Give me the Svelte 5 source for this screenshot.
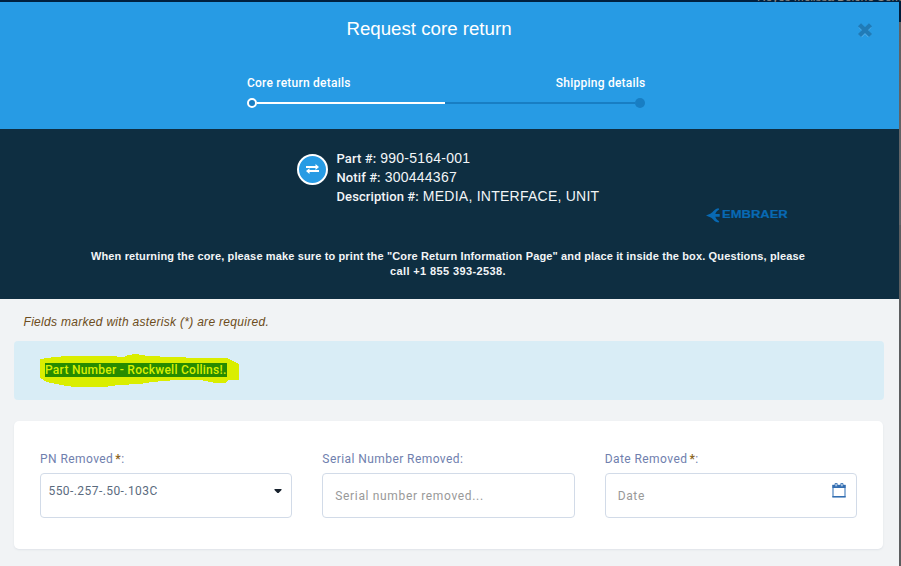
<script>
  const steps = ['Core return details', 'Shipping details'];
  const facts = [
    ['Part #:', '990-5164-001'],
    ['Notif #:', '300444367'],
    ['Description #:', 'MEDIA, INTERFACE, UNIT'],
  ];
</script>

<div class="page">
  <div class="backdrop"><span>Reyes Melissa Belone Sem</span></div>
  <div class="modal">
    <header>
      <div class="title"><h1>Request core return</h1></div>
      <button class="close" aria-label="Close">
        <svg width="16" height="16" viewBox="0 0 16 16">
          <path d="M3.2 4 12.8 13.8M12.8 4 3.2 13.8" stroke="#62b8ef" stroke-width="4.4" />
          <path d="M2.5 2.7 13.5 13.5M13.5 2.7 2.5 13.5" stroke="#207bb7" stroke-width="4.4" />
        </svg>
      </button>
      <div class="steps">
        <div class="names">
          {#each steps as step}<span>{step}</span>{/each}
        </div>
        <div class="track"><i class="dot on"></i><i class="line done"></i><i class="line"></i><i class="dot"></i></div>
      </div>
    </header>

    <section class="summary">
      <div class="part">
        <div class="badge">
          <svg width="13" height="10" viewBox="0 0 13 10" fill="#fff">
            <path d="M0 2h9.5V0L13 3 9.5 6V4H0zM13 6H3.5V4.2L0 7l3.5 3V8H13z" />
          </svg>
        </div>
        <dl>
          {#each facts as [k, v]}<div><dt>{k}</dt> <dd>{v}</dd></div>{/each}
        </dl>
      </div>
      <div class="brand">
        <svg width="14" height="15" viewBox="0 0 14 15" fill="#0869b3">
          <path d="M0 7.4 4.8 5.4C7.2 4 8.6.8 12.6.2L13.2 1.6C11 2.8 9.9 4.3 9.3 6.1h4.4v2.6H9.3c.6 1.8 1.7 3.3 3.9 4.5l-.6 1.4C8.6 14 7.2 10.8 4.8 9.4Z" />
        </svg>
        <span>EMBRAER</span>
      </div>
      <p>
        <span class="l1">When returning the core, please make sure to print the "Core Return Information Page" and place it inside the box. Questions, please</span><br />
        <span class="l2">call +1 855 393-2538.</span>
      </p>
    </section>

    <main>
      <div class="hint"><span>Fields marked with asterisk (*) are required.</span></div>
      <div class="notice">
        <svg class="marker" width="200" height="34" viewBox="0 0 200 34" shape-rendering="crispEdges" fill="#daee00">
          <path d="M0 5 14 3 28 2H69L84 3 88 1 96 0 108 2 131 3 160 4H187L191 6 199 10V26H188L186 29H175L161 26H136L112 28 100 30 78 31 64 33H36L26 32 7 28 0 24Z" />
        </svg>
        <mark>Part Number - Rockwell Collins!.</mark>
      </div>
      <div class="card">
        <div class="field">
          <label for="pn"><span>PN Removed</span><b>*</b>:</label>
          <div class="box select" id="pn">
            <span>550-.257-.50-.103C</span>
            <svg width="8" height="5" viewBox="0 0 8 5"><path d="M.5 0h7v1L4.6 4H3.4L.5 1z" fill="#17212d" /></svg>
          </div>
        </div>
        <div class="field">
          <label for="sn"><span>Serial Number Removed:</span></label>
          <div class="box" id="sn"><span class="ph">Serial number removed...</span></div>
        </div>
        <div class="field">
          <label for="dt"><span>Date Removed</span><b>*</b>:</label>
          <div class="box date" id="dt">
            <span class="ph">Date</span>
            <svg width="14" height="15" viewBox="0 0 14 15">
              <path d="M1 2.5h12v11.3H1z" fill="#fff" stroke="#5e8fc5" stroke-width="1.3" />
              <path d="M.4 2h13.2v3H.4z" fill="#346eb1" />
              <path d="M.4 13h13.2v1.3H.4z" fill="#346eb1" />
              <path d="M3 .5h2.2v3.2H3zM8.8.5H11v3.2H8.8z" fill="#c6d9ee" stroke="#346eb1" stroke-width=".8" />
            </svg>
          </div>
        </div>
      </div>
    </main>
  </div>
</div>

<style>
  * { box-sizing: border-box; }
  .page {
    position: relative; width: 901px; height: 566px; padding-top: 2px; overflow: hidden;
    font-family: Roboto, 'Liberation Sans', sans-serif;
    background: linear-gradient(#001d3a 22px, #5f6062 22px, #646568 225px, #5c5d5f 225px);
  }
  .backdrop { position: absolute; top: 0; left: 0; width: 901px; height: 2px; background: #00203e; }
  .backdrop span { position: absolute; left: 757px; top: -9px; font: 12px/12px 'Liberation Sans', sans-serif; color: #8f8b85; white-space: nowrap; letter-spacing: -.1px; }
  .modal { position: relative; width: 899px; height: 564px; background: #f1f3f5; }
  header { position: relative; height: 127px; background: #279be4; color: #fff; overflow: hidden; }
  .title { padding: 16px 41px 0 0; text-align: center; }
  h1 { margin: 0; font: 400 18.7px/22px 'Liberation Sans', sans-serif; }
  .close { position: absolute; right: 26px; top: 20px; padding: 0; border: 0; background: none; line-height: 0; }
  .steps { width: 398px; margin: 34px 0 0 247px; }
  .names { display: flex; justify-content: space-between; font: 500 12px/18px Roboto, sans-serif; letter-spacing: .23px; }
  .names span:last-child { margin-right: -.5px; }
  .track { display: flex; align-items: center; height: 10px; margin-top: 6px; }
  .dot { width: 10px; height: 10px; border-radius: 50%; background: #187ec3; }
  .dot.on { border: 2px solid #fff; }
  .line { flex: 1; height: 2px; background: #187ec3; }
  .line.done { background: #fff; flex: 0 0 188px; }
  .summary { height: 170px; background: #0e2e41; color: #f2f5f7; padding-top: 20px; }
  .part { display: flex; padding-left: 297px; height: 57px; }
  .badge { width: 31px; height: 31px; border: 2px solid #fff; border-radius: 50%; background: #279be4; margin: 5px 8.5px 0 0; display: grid; place-items: center; }
  .badge svg { margin-top: -2px; }
  dl { margin: 0; }
  dl div { display: flex; gap: 4px; height: 19px; align-items: baseline; line-height: 19px; white-space: nowrap; }
  dt { font: 500 13px/19px Roboto, sans-serif; letter-spacing: .1px; }
  dd { margin: 0; font: 14px/19px 'Liberation Sans', sans-serif; letter-spacing: .25px; }
  .brand { display: flex; align-items: center; height: 16px; margin: 1px 0 0 706px; color: #0869b3; font: 700 10px/16px 'Liberation Sans', sans-serif; }
  .brand span { display: block; transform: scaleX(1.3); transform-origin: left; margin-left: 2px; -webkit-text-stroke: .2px #0869b3; }
  p { margin: 26px 0 0; width: 896px; text-align: center; font: 700 11px/15px 'Liberation Sans', sans-serif; white-space: nowrap; }
  .l1 { letter-spacing: .135px; }
  .l2 { letter-spacing: .39px; }
  .hint { padding: 14px 0 0 23.5px; height: 42px; font: italic 12px/18px 'Liberation Sans', sans-serif; letter-spacing: .3px; color: #6c4c20; }
  .notice { position: relative; width: 870px; height: 59px; margin-left: 14px; border-radius: 4px; background: #d9edf6; padding: 22px 0 0 31px; }
  .marker { position: absolute; left: 26px; top: 13px; }
  mark { position: relative; display: inline-block; height: 14px; background: #278b00; color: #daf000; font: 500 12px/14px Roboto, sans-serif; letter-spacing: .26px; white-space: nowrap; vertical-align: top; }
  .card { display: flex; gap: 30px; width: 869px; height: 128px; margin: 20.5px 0 0 14px; padding: 29.5px 26px; border-radius: 5px; background: #fff; box-shadow: 0 1px 2px #dfe3e8; }
  .field { flex: 1; min-width: 0; }
  label { display: block; height: 23px; font: 400 12px/18px Roboto, sans-serif; letter-spacing: .43px; color: #7080ae; white-space: nowrap; }
  b { color: #8a6420; font-weight: 700; margin-left: 2px; }
  .box { position: relative; display: flex; height: 45px; border: 1px solid #d2dbe8; border-radius: 4px; padding: 0 12px; align-items: center; font: 400 12px/18px Roboto, sans-serif; letter-spacing: .65px; background: #fff; }
  .ph { color: #999; }
  .select { align-items: flex-start; justify-content: space-between; padding: 8px 9px 0 7.5px; color: #5b6b7e; letter-spacing: .43px; }
  .select svg { margin-top: 7px; }
  .date { justify-content: space-between; padding-right: 10px; }
  .date svg { margin-bottom: 11px; }
</style>
